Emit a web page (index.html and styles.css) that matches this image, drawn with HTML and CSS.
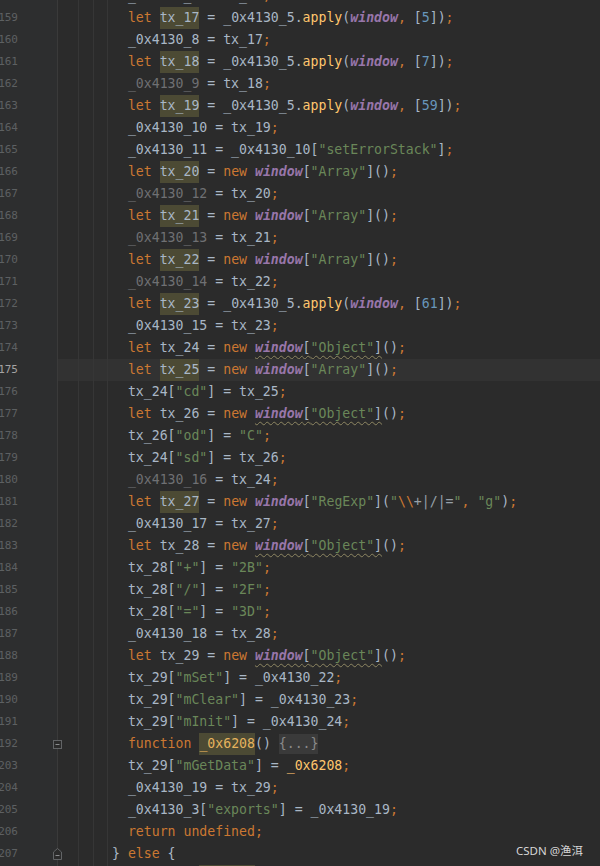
FILE: index.html
```html
<!DOCTYPE html>
<html lang="en">
<head>
    <meta charset="UTF-8">
    <meta name="viewport" content="width=device-width, initial-scale=1.0">
    <title>Editor</title>
    <link rel="stylesheet" href="styles.css">
</head>
<body>
    <div class="editor">
        <div class="line first"><div class="gutter"><span class="num">158</span></div><div class="code">  _0x4130_7 = tx_16<span class="p">;</span></div></div>
        <div class="line"><div class="gutter"><span class="num">159</span></div><div class="code">  <span class="k">let</span> <span class="h">tx_17</span> = _0x4130_5.<span class="f">apply</span>(<span class="g">window</span><span class="p">,</span> [<span class="n">5</span>])<span class="p">;</span></div></div>
        <div class="line"><div class="gutter"><span class="num">160</span></div><div class="code">  _0x4130_8 = tx_17<span class="p">;</span></div></div>
        <div class="line"><div class="gutter"><span class="num">161</span></div><div class="code">  <span class="k">let</span> <span class="h">tx_18</span> = _0x4130_5.<span class="f">apply</span>(<span class="g">window</span><span class="p">,</span> [<span class="n">7</span>])<span class="p">;</span></div></div>
        <div class="line"><div class="gutter"><span class="num">162</span></div><div class="code">  <span class="u">_0x4130_9</span> = tx_18<span class="p">;</span></div></div>
        <div class="line"><div class="gutter"><span class="num">163</span></div><div class="code">  <span class="k">let</span> <span class="h">tx_19</span> = _0x4130_5.<span class="f">apply</span>(<span class="g">window</span><span class="p">,</span> [<span class="n">59</span>])<span class="p">;</span></div></div>
        <div class="line"><div class="gutter"><span class="num">164</span></div><div class="code">  _0x4130_10 = tx_19<span class="p">;</span></div></div>
        <div class="line"><div class="gutter"><span class="num">165</span></div><div class="code">  _0x4130_11 = _0x4130_10[<span class="s">"setErrorStack"</span>]<span class="p">;</span></div></div>
        <div class="line"><div class="gutter"><span class="num">166</span></div><div class="code">  <span class="k">let</span> <span class="h">tx_20</span> = <span class="k">new</span> <span class="g">window</span>[<span class="s">"Array"</span>]()<span class="p">;</span></div></div>
        <div class="line"><div class="gutter"><span class="num">167</span></div><div class="code">  <span class="u">_0x4130_12</span> = tx_20<span class="p">;</span></div></div>
        <div class="line"><div class="gutter"><span class="num">168</span></div><div class="code">  <span class="k">let</span> <span class="h">tx_21</span> = <span class="k">new</span> <span class="g">window</span>[<span class="s">"Array"</span>]()<span class="p">;</span></div></div>
        <div class="line"><div class="gutter"><span class="num">169</span></div><div class="code">  <span class="u">_0x4130_13</span> = tx_21<span class="p">;</span></div></div>
        <div class="line"><div class="gutter"><span class="num">170</span></div><div class="code">  <span class="k">let</span> <span class="h">tx_22</span> = <span class="k">new</span> <span class="g">window</span>[<span class="s">"Array"</span>]()<span class="p">;</span></div></div>
        <div class="line"><div class="gutter"><span class="num">171</span></div><div class="code">  <span class="u">_0x4130_14</span> = tx_22<span class="p">;</span></div></div>
        <div class="line"><div class="gutter"><span class="num">172</span></div><div class="code">  <span class="k">let</span> <span class="h">tx_23</span> = _0x4130_5.<span class="f">apply</span>(<span class="g">window</span><span class="p">,</span> [<span class="n">61</span>])<span class="p">;</span></div></div>
        <div class="line"><div class="gutter"><span class="num">173</span></div><div class="code">  _0x4130_15 = tx_23<span class="p">;</span></div></div>
        <div class="line"><div class="gutter"><span class="num">174</span></div><div class="code">  <span class="k">let</span> tx_24 = <span class="k">new</span> <span class="w"><span class="g">window</span>[<span class="s">"Object"</span>]</span>()<span class="p">;</span></div></div>
        <div class="line current"><div class="gutter"><span class="num">175</span></div><div class="code">  <span class="k">let</span> <span class="h">tx_25</span> = <span class="k">new</span> <span class="g">window</span>[<span class="s">"Array"</span>]()<span class="p">;</span></div></div>
        <div class="line"><div class="gutter"><span class="num">176</span></div><div class="code">  tx_24[<span class="s">"cd"</span>] = tx_25<span class="p">;</span></div></div>
        <div class="line"><div class="gutter"><span class="num">177</span></div><div class="code">  <span class="k">let</span> tx_26 = <span class="k">new</span> <span class="w"><span class="g">window</span>[<span class="s">"Object"</span>]</span>()<span class="p">;</span></div></div>
        <div class="line"><div class="gutter"><span class="num">178</span></div><div class="code">  tx_26[<span class="s">"od"</span>] = <span class="s">"C"</span><span class="p">;</span></div></div>
        <div class="line"><div class="gutter"><span class="num">179</span></div><div class="code">  tx_24[<span class="s">"sd"</span>] = tx_26<span class="p">;</span></div></div>
        <div class="line"><div class="gutter"><span class="num">180</span></div><div class="code">  <span class="u">_0x4130_16</span> = tx_24<span class="p">;</span></div></div>
        <div class="line"><div class="gutter"><span class="num">181</span></div><div class="code">  <span class="k">let</span> <span class="h">tx_27</span> = <span class="k">new</span> <span class="g">window</span>[<span class="s">"RegExp"</span>](<span class="s">"</span><span class="e">\\</span><span class="r">+|/|=</span><span class="s">"</span><span class="p">,</span> <span class="s">"g"</span>)<span class="p">;</span></div></div>
        <div class="line"><div class="gutter"><span class="num">182</span></div><div class="code">  _0x4130_17 = tx_27<span class="p">;</span></div></div>
        <div class="line"><div class="gutter"><span class="num">183</span></div><div class="code">  <span class="k">let</span> tx_28 = <span class="k">new</span> <span class="w"><span class="g">window</span>[<span class="s">"Object"</span>]</span>()<span class="p">;</span></div></div>
        <div class="line"><div class="gutter"><span class="num">184</span></div><div class="code">  tx_28[<span class="s">"+"</span>] = <span class="s">"2B"</span><span class="p">;</span></div></div>
        <div class="line"><div class="gutter"><span class="num">185</span></div><div class="code">  tx_28[<span class="s">"/"</span>] = <span class="s">"2F"</span><span class="p">;</span></div></div>
        <div class="line"><div class="gutter"><span class="num">186</span></div><div class="code">  tx_28[<span class="s">"="</span>] = <span class="s">"3D"</span><span class="p">;</span></div></div>
        <div class="line"><div class="gutter"><span class="num">187</span></div><div class="code">  _0x4130_18 = tx_28<span class="p">;</span></div></div>
        <div class="line"><div class="gutter"><span class="num">188</span></div><div class="code">  <span class="k">let</span> tx_29 = <span class="k">new</span> <span class="w"><span class="g">window</span>[<span class="s">"Object"</span>]</span>()<span class="p">;</span></div></div>
        <div class="line"><div class="gutter"><span class="num">189</span></div><div class="code">  tx_29[<span class="s">"mSet"</span>] = _0x4130_22<span class="p">;</span></div></div>
        <div class="line"><div class="gutter"><span class="num">190</span></div><div class="code">  tx_29[<span class="s">"mClear"</span>] = _0x4130_23<span class="p">;</span></div></div>
        <div class="line"><div class="gutter"><span class="num">191</span></div><div class="code">  tx_29[<span class="s">"mInit"</span>] = _0x4130_24<span class="p">;</span></div></div>
        <div class="line"><div class="gutter"><span class="num">192</span>
            <svg class="fold" width="9" height="9" viewBox="0 0 9 9"><rect x="0.5" y="0.5" width="8" height="8" fill="#2b2b2b" stroke="#626466"/><path d="M2.5 4.5h4" stroke="#8a8c8e"/></svg>
        </div><div class="code">  <span class="k">function</span> <span class="h hf">_0x6208</span>() <span class="folded">{...}</span></div></div>
        <div class="line"><div class="gutter"><span class="num">203</span></div><div class="code">  tx_29[<span class="s">"mGetData"</span>] = <span class="f">_0x6208</span><span class="p">;</span></div></div>
        <div class="line"><div class="gutter"><span class="num">204</span></div><div class="code">  _0x4130_19 = tx_29<span class="p">;</span></div></div>
        <div class="line"><div class="gutter"><span class="num">205</span></div><div class="code">  _0x4130_3[<span class="s">"exports"</span>] = _0x4130_19<span class="p">;</span></div></div>
        <div class="line"><div class="gutter"><span class="num">206</span></div><div class="code">  <span class="k">return undefined;</span></div></div>
        <div class="line"><div class="gutter"><span class="num">207</span>
            <svg class="fold" width="9" height="12" viewBox="0 0 9 12"><path d="M0.5 11.5V4L4.5 0.5L8.5 4v7.5z" fill="#2b2b2b" stroke="#626466"/><path d="M2.5 7.5h4" stroke="#8a8c8e"/></svg>
        </div><div class="code">} <span class="k">else</span> {</div></div>
        <div class="line"><div class="gutter"><span class="num">208</span></div><div class="code">  <span class="k">function</span> <span class="h hf">_0x5a1c</span>() {</div></div>
    </div>

    <div class="watermark">CSDN @渔洱</div>
</body>
</html>
```

FILE: styles.css
```css
body {
    margin: 0;
    height: 866px;
    overflow: hidden;
    background-color: #2b2b2b;
    color: #a9b7c6;
    font-family: "DejaVu Sans Mono", "Liberation Mono", monospace;
    font-size: 13.2px;
}
.editor {
    display: flex;
    flex-direction: column;
}
.line {
    display: flex;
    height: 22px;
    line-height: 22px;
    flex: none;
}
.line.first {
    margin-top: -15px;
}
.gutter {
    width: 57px;
    flex: none;
    display: flex;
    align-items: center;
    background-color: #2d2e2f;
}
.num {
    width: 18px;
    display: flex;
    justify-content: flex-end;
    font-size: 11px;
    color: #5d6062;
    white-space: nowrap;
}
.current .num {
    color: #a4a3a3;
}
.fold {
    margin-left: auto;
    margin-right: -5px;
    position: relative;
    z-index: 1;
}
.code {
    flex: 1;
    padding-left: 55px;
    white-space: pre;
    background-image:
        linear-gradient(#3a3a3a, #3a3a3a),
        linear-gradient(#363636, #363636),
        linear-gradient(#363636, #363636),
        linear-gradient(#363636, #363636);
    background-size: 1px 100%;
    background-repeat: no-repeat;
    background-position: 0 0, 21px 0, 36px 0, 50px 0;
}
.current .code {
    background-color: #323232;
}
.k { color: #cc7832; }
.p { color: #cc7832; }
.e { color: #cc7832; }
.s { color: #6a8759; }
.r { color: #96a0a8; }
.n { color: #6897bb; }
.f { color: #ffc66d; }
.u { color: #6f7073; }
.g {
    color: #9876aa;
    font-style: italic;
    font-weight: bold;
}
.h {
    display: inline-block;
    height: 22px;
    background-color: #4c4a34;
}
.hf {
    color: #e6b35e;
}
.w {
    text-decoration: underline wavy #8e8762;
    text-decoration-thickness: 1px;
    text-underline-offset: 3px;
}
.folded {
    display: inline-block;
    height: 20px;
    line-height: 20px;
    background-color: #3a3a3a;
    color: #8a8a8a;
}
.watermark {
    position: absolute;
    right: 17px;
    bottom: 8px;
    font-family: "Noto Sans", "Noto Sans CJK SC", sans-serif;
    font-size: 11.5px;
    color: #d6d6d6;
}
```
